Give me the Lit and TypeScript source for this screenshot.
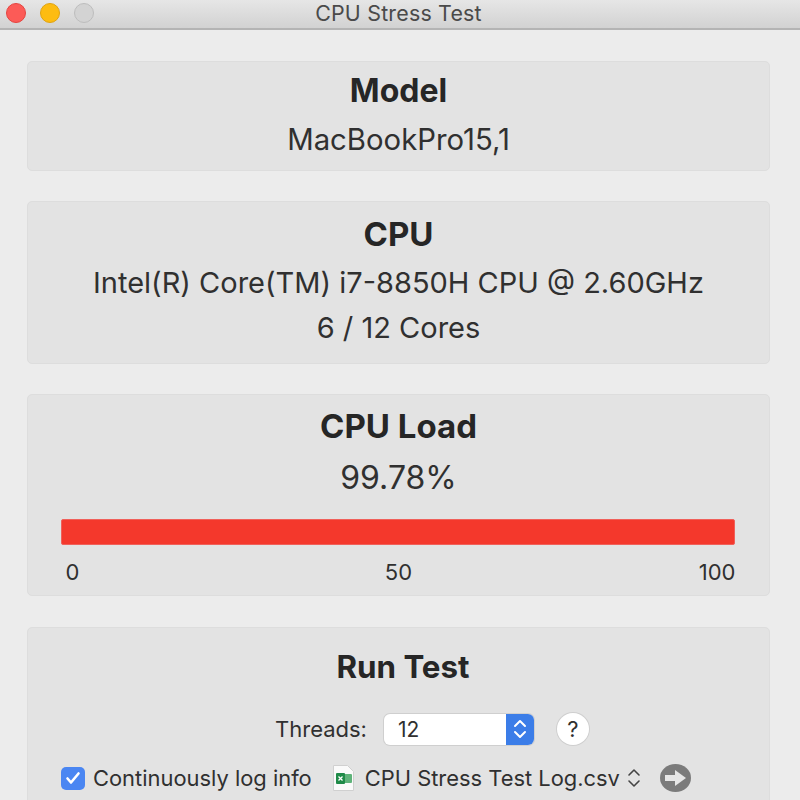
import { LitElement, html, css } from "lit";
import { customElement } from "lit/decorators.js";

@customElement("app-root")
export class AppRoot extends LitElement {
  static styles = css`
    :host { display: block; width: 800px; height: 800px; overflow: hidden; background: #ececec; font-family: Inter, "Liberation Sans", sans-serif; color: #2b2b2b; }
    .titlebar { height: 28px; border-bottom: 2px solid #b4b4b4; background: linear-gradient(#e6e6e6, #d2d2d2); display: flex; align-items: center; position: relative; justify-content: center; }
    .lights { position: absolute; left: 6px; top: 3px; display: flex; gap: 14px; }
    .light { width: 20px; height: 20px; border-radius: 50%; box-sizing: border-box; border: 1px solid; }
    .red { background: #fc5b57; border-color: #e5443f; }
    .yellow { background: #fdbc11; border-color: #e0a310; }
    .gray { background: #d3d3d3; border-color: #bdbdbd; }
    .wintitle { font-size: 21.4px; color: #4a4a4a; letter-spacing: 0.2px; margin-top: -3px; margin-left: -3px; }
    .content { padding: 31px 30px 0 27px; display: flex; flex-direction: column; gap: 30px; }
    .card { background: #e3e3e3; border: 1px solid #dddddd; border-radius: 5px; text-align: center; box-sizing: border-box; display: flex; flex-direction: column; align-items: center; }
    .model { height: 110px; padding-top: 11px; }
    .cpu { height: 163px; padding-top: 14px; }
    .load { height: 202px; padding-top: 13px; }
    .run { height: 220px; padding-top: 21px; margin-top: 1px; }
    h2 { margin: 0; font-size: 32px; line-height: 36px; font-weight: 700; color: #262626; }
    .val { font-size: 29px; line-height: 45px; font-weight: 400; color: #303030; }
    .model .val { margin-top: 8px; font-size: 29.3px; }
    .cpu h2 { margin-bottom: 8px; font-size: 33px; }
    .load h2 { font-size: 33px; }
    .loadval { font-size: 32px; line-height: 50px; margin-top: 9px; color: #303030; }
    .bar { width: 674px; height: 26px; margin: 16px 1px 0 0; background: #f4382c; border-radius: 2px; box-sizing: border-box; border: 1px solid #f0605a; }
    .scale { width: 674px; display: grid; grid-template-columns: 1fr auto 1fr; font-size: 22px; line-height: 24px; margin: 15px 0 0 0; color: #303030; box-sizing: border-box; }
    .scale span:first-child { text-align: left; padding-left: 4px; }
    .scale span:last-child { text-align: right; }
    .run h2 { font-size: 31.3px; margin-left: 9px; }
    .row1 { display: flex; align-items: center; align-self: flex-start; font-size: 22px; margin: 27px 0 0 247px; height: 34px; color: #303030; }
    .stepper { display: flex; width: 150px; height: 31px; margin-left: 17px; border-radius: 6px; background: #fff; box-shadow: 0 0 0 1px #cfcfcf; overflow: hidden; }
    .stepper .num { flex: 1; padding-left: 14px; line-height: 32px; font-size: 21px; text-align: left; }
    .stepper .arrows { width: 28px; background: #3b7de8; display: flex; align-items: center; justify-content: center; }
    .help { width: 32px; height: 32px; border-radius: 50%; background: #fff; box-shadow: 0 0 0 1px #cfcfcf; margin-left: 23px; display: flex; align-items: center; justify-content: center; font-size: 22px; }
    .row2 { display: flex; align-items: center; width: 100%; box-sizing: border-box; padding-left: 33px; margin-top: 16px; height: 32px; font-size: 21.9px; color: #303030; }
    .check { width: 24px; height: 23px; border-radius: 5px; background: #4a86f2; display: flex; align-items: center; justify-content: center; margin-right: 8px; }
    .file { margin-left: 21px; margin-right: 11px; display: block; }
    .updown { margin-left: 7px; }
    .go { margin-left: 19px; }
  `;

  render() {
    return html`
      <div class="titlebar">
        <div class="lights"><div class="light red"></div><div class="light yellow"></div><div class="light gray"></div></div>
        <div class="wintitle">CPU Stress Test</div>
      </div>
      <div class="content">
        <div class="card model"><h2>Model</h2><div class="val">MacBookPro15,1</div></div>
        <div class="card cpu"><h2>CPU</h2><div class="val">Intel(R) Core(TM) i7-8850H CPU @ 2.60GHz</div><div class="val">6 / 12 Cores</div></div>
        <div class="card load">
          <h2>CPU Load</h2>
          <div class="loadval">99.78%</div>
          <div class="bar"></div>
          <div class="scale"><span>0</span><span>50</span><span>100</span></div>
        </div>
        <div class="card run">
          <h2>Run Test</h2>
          <div class="row1">
            <span>Threads:</span>
            <div class="stepper">
              <div class="num">12</div>
              <div class="arrows">
                <svg width="16" height="24" viewBox="0 0 16 24" fill="none" stroke="#fff" stroke-width="2" stroke-linecap="round" stroke-linejoin="round"><path d="M3 9 8 4l5 5"/><path d="M3 15l5 5 5-5"/></svg>
              </div>
            </div>
            <div class="help">?</div>
          </div>
          <div class="row2">
            <div class="check"><svg width="16" height="14" viewBox="0 0 16 14" fill="none" stroke="#fff" stroke-width="2.6" stroke-linecap="round" stroke-linejoin="round"><path d="M2.5 7.5 6 11.5 13.5 2.5"/></svg></div>
            <span>Continuously log info</span>
            <svg class="file" width="21" height="26" viewBox="0 0 21 26"><path d="M.5.5h14l6 6v19H.5z" fill="#fafafa" stroke="#d0d0d0"/><rect x="9" y="9" width="10" height="9" rx="1" fill="#5fb37a"/><rect x="3" y="8" width="9" height="11" rx="1" fill="#1f8a48"/><path d="M5.5 11.5l4 4m0-4l-4 4" stroke="#fff" stroke-width="1.3"/></svg>
            <span>CPU Stress Test Log.csv</span>
            <svg class="updown" width="14" height="22" viewBox="0 0 14 22" fill="none" stroke="#444" stroke-width="1.6" stroke-linecap="round" stroke-linejoin="round"><path d="M2 8l5-5 5 5"/><path d="M2 14l5 5 5-5"/></svg>
            <svg class="go" width="31" height="28" viewBox="0 0 31 28"><ellipse cx="15.5" cy="14" rx="15.5" ry="14" fill="#7b7b7b"/><path d="M5 11h10V6l11 8-11 8v-5H5z" fill="#e6e6e6"/></svg>
          </div>
        </div>
      </div>
    `;
  }
}
